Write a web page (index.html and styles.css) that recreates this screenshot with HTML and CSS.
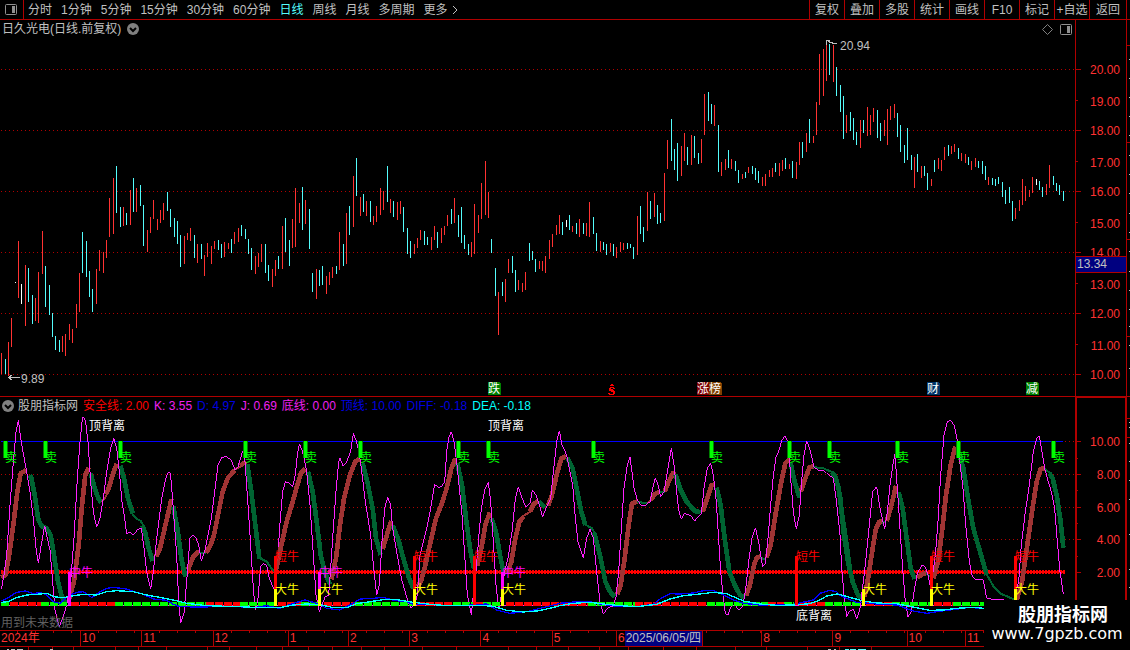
FILE: index.html
```html
<!DOCTYPE html>
<html lang="zh-CN">
<head>
    <meta charset="UTF-8">
    <meta name="viewport" content="width=device-width, initial-scale=1.0">
    <title>日久光电 日线</title>
    <link rel="stylesheet" href="styles.css">
</head>
<body>

    <!-- Toolbar -->
    <header class="toolbar">
        <button class="panel-btn" aria-label="侧栏">
            <svg class="icon" width="13" height="11" viewBox="0 0 13 11">
                <rect x="1.5" y=".5" width="11" height="10" rx="1" fill="none" stroke="#909090"/>
                <rect x="8" y="2" width="3" height="7" fill="#909090"/>
            </svg>
        </button>
        <nav class="periods">
            <button>分时</button>
            <button>1分钟</button>
            <button>5分钟</button>
            <button>15分钟</button>
            <button>30分钟</button>
            <button>60分钟</button>
            <button class="active">日线</button>
            <button>周线</button>
            <button>月线</button>
            <button>多周期</button>
            <button class="more">更多
                <svg class="icon" width="6" height="10" viewBox="0 0 6 10"><path d="M1 1L5 5L1 9" fill="none" stroke="#c0c0c0"/></svg>
            </button>
        </nav>
        <div class="tools">
            <button>复权</button>
            <button>叠加</button>
            <button>多股</button>
            <button>统计</button>
            <button>画线</button>
            <button>F10</button>
            <button>标记</button>
            <button>+自选</button>
            <button>返回</button>
        </div>
    </header>

    <!-- Price chart -->
    <section class="pane">
        <div class="pane-head">
            <div class="head-left">
                <h1>日久光电(日线.前复权)</h1>
                <button class="toggle" aria-label="展开">
                    <svg class="icon" width="12" height="12" viewBox="0 0 12 12"><circle cx="6" cy="6" r="6" fill="#808080"/><path d="M3 5L6 8L9 5" fill="none" stroke="#000" stroke-width="2"/></svg>
                </button>
                <div class="head-icons">
                    <svg class="icon" width="11" height="11" viewBox="0 0 11 11"><path d="M5.5 .5L10.5 5.5L5.5 10.5L.5 5.5Z" fill="none" stroke="#808080"/></svg>
                    <svg class="icon" width="12" height="11" viewBox="0 0 12 11"><rect x=".5" y=".5" width="11" height="10" rx="1" fill="none" stroke="#909090"/><rect x="7" y="2" width="3" height="7" fill="#909090"/></svg>
                </div>
            </div>
            <div class="head-axis"></div>
            <div class="head-edge"></div>
        </div>
        <svg id="price" class="chart" viewBox="0 38 1130 358"></svg>
    </section>

    <!-- Indicator chart -->
    <section class="pane indicator">
        <div class="pane-head">
            <div class="head-left legend">
                <button class="toggle" aria-label="指标">
                    <svg class="icon" width="12" height="12" viewBox="0 0 12 12"><circle cx="6" cy="6" r="6" fill="#808080"/><path d="M3 5L6 8L9 5" fill="none" stroke="#000" stroke-width="2"/></svg>
                </button>
                <span>股朋指标网</span>
                <span class="red">安全线: 2.00</span>
                <span class="magenta">K: 3.55</span>
                <span class="blue">D: 4.97</span>
                <span class="magenta">J: 0.69</span>
                <span class="magenta">底线: 0.00</span>
                <span class="blue">顶线: 10.00</span>
                <span class="blue">DIFF: -0.18</span>
                <span class="cyan">DEA: -0.18</span>
            </div>
            <div class="head-axis"></div>
            <div class="head-edge"></div>
        </div>
        <svg id="kdj" class="chart" viewBox="0 415 1130 215"></svg>
    </section>

    <!-- Time axis, each month grows with its number of trading days -->
    <ol class="months">
        <li style="flex-grow: 81">2024年</li>
        <li style="flex-grow: 61">10</li>
        <li style="flex-grow: 71">11</li>
        <li style="flex-grow: 75">12</li>
        <li style="flex-grow: 60">1</li>
        <li style="flex-grow: 61">2</li>
        <li style="flex-grow: 71">3</li>
        <li style="flex-grow: 71">4</li>
        <li style="flex-grow: 64">5</li>
        <li style="flex-grow: 146">6<time datetime="2025-06-05">2025/06/05/四</time></li>
        <li style="flex-grow: 71">8</li>
        <li style="flex-grow: 74">9</li>
        <li style="flex-grow: 58">10</li>
        <li style="flex-grow: 166">11</li>
    </ol>
    <svg id="next" class="chart" viewBox="0 647 1130 3"></svg>

    <div class="watermark">
        <strong>股朋指标网</strong>
        <span>www.7gpzb.com</span>
    </div>

    <script src="script.js"></script>
</body>
</html>
```
FILE: styles.css
```css
/* Basic Reset */
* {
    margin: 0;
    padding: 0;
    box-sizing: border-box;
}

body {
    position: relative;
    background-color: #000;
    color: #c0c0c0;
    font-family: "Liberation Sans", "Noto Sans CJK SC", sans-serif;
    font-size: 12px;
    line-height: 18px;
    overflow-x: hidden;
}

button {
    background: none;
    border: none;
    color: inherit;
    font: inherit;
    white-space: nowrap;
    cursor: pointer;
}

.icon,
.chart {
    display: block;
}

/* Toolbar */
.toolbar {
    display: flex;
    height: 20px;
    border-bottom: 1px solid #b00000;
}

.panel-btn {
    width: 24px;
    padding-left: 4px;
    border-right: 1px solid #b00000;
}

.periods {
    display: flex;
    gap: 9px;
    padding-left: 4px;
}

.periods .active {
    color: #54fcfc;
}

.periods .more {
    display: flex;
    align-items: center;
    gap: 4px;
}

.tools {
    display: flex;
    margin-left: auto;
    padding-right: 3px;
}

.tools button {
    width: 35px;
    border-left: 1px solid #b00000;
}

.tools button:last-child {
    width: 38px;
    border-right: 1px solid #b00000;
}

/* Panes */
.pane-head {
    display: grid;
    grid-template-columns: minmax(0, 1075fr) 52fr 3fr;
    height: 18px;
}

.head-left {
    display: flex;
    align-items: center;
    padding-left: 2px;
}

.head-left h1 {
    font-size: 12px;
    font-weight: normal;
    margin-right: 6px;
}

.head-icons {
    display: flex;
    gap: 7px;
    margin-left: auto;
    padding-right: 3px;
}

.head-axis {
    border-left: 1px solid #b00000;
    border-right: 1px solid #b00000;
}

.indicator {
    border-top: 1px solid #b00000;
}

.indicator .head-axis {
    border-width: 2px;
    border-top: 1px solid #b00000;
}

/* Indicator legend */
.legend {
    gap: 5px;
    white-space: nowrap;
}

.legend .toggle {
    margin-right: -1px;
}

.red { color: #ff0000; }
.blue { color: #0000e0; }
.magenta { color: #f020f0; }
.cyan { color: #00ffff; }

/* Chart drawing */
.chart {
    width: 100%;
    height: auto;
    shape-rendering: crispEdges;
}

.grid { stroke: #b00000; stroke-dasharray: 1 3; }
.frame { stroke: #b00000; }
.scale { fill: #ff3232; text-anchor: end; }
.r { fill: #ff3232; }
.c { fill: #54fcfc; }
.w { fill: #fff; }
.label { fill: #c0c0c0; }
.faint { fill: #606060; }
.sell { fill: #00ff00; }
.pointer { fill: none; stroke: #c0c0c0; }

.curve {
    fill: none;
    stroke-width: 3;
}

.up { stroke: #a03434; stroke-width: 14; stroke-linejoin: round; }
.down { stroke: #006432; stroke-width: 14; stroke-linejoin: round; }
.thin { stroke-width: 6; }
.j { stroke: #ff20ff; }
.diff { stroke: #0000ff; stroke-width: 4; }
.dea { stroke: #00ffff; stroke-width: 4; }

/* Time axis */
.months {
    display: flex;
    height: 17px;
    line-height: 15px;
    list-style: none;
    color: #ff3232;
    border-top: 1px solid #b00000;
    border-bottom: 1px solid #b00000;
}

.months li {
    display: flex;
    flex-basis: 0;
    min-width: 0;
    text-indent: 1px;
    border-left: 1px solid #b00000;
    background: repeating-linear-gradient(to right, transparent 0 17px, #b00000 17px 18px) 0 0 / 100% 2px no-repeat;
}

.months li:first-child {
    border-left: none;
}

.months time {
    padding: 0 1px;
    text-indent: 0;
    background-color: #000080;
    color: #c0c0c0;
    border-right: 1px solid #b00000;
    white-space: nowrap;
}

/* Site mark over the bottom right corner */
.watermark {
    position: absolute;
    right: 0;
    bottom: 0;
    display: flex;
    flex-direction: column;
    align-items: center;
    width: 146px;
    height: 50px;
    padding-top: 5px;
    background-color: #000;
    color: #fff;
}

.watermark strong {
    padding-left: 12px;
    font-size: 18px;
    line-height: 20px;
}

.watermark span {
    font-family: "DejaVu Sans", sans-serif;
    font-size: 16px;
    line-height: 18px;
}
```
FILE: script.js
```javascript
const NS = 'http://www.w3.org/2000/svg';
const price = document.getElementById('price');
const kdj = document.getElementById('kdj');
const next = document.getElementById('next');

function add(parent, tag, attrs, text) {
    const el = document.createElementNS(NS, tag);
    for (const key in attrs) el.setAttribute(key, attrs[key]);
    if (text) el.textContent = text;
    parent.appendChild(el);
    return el;
}

function line(parent, cls, x1, y1, x2, y2) {
    add(parent, 'path', { class: cls, d: `M${x1} ${y1}L${x2} ${y2}` });
}

function box(parent, x, y, width, height, fill) {
    add(parent, 'rect', { x, y, width, height, fill });
}

function label(parent, cls, x, y, text) {
    add(parent, 'text', { class: cls, x, y }, text);
}

// Daily range: x, high, low, colour (r up, c down, w flat)
const bars = `1 353 374 r,5 359 374 c,8 342 376 r,11 318 347 r,15 282 283 w,18 241 298 r,21 284 304 w,25 265 326 r,28 268 302 c,32 295 324 c,
35 298 321 r,38 272 323 r,42 231 274 r,45 266 307 c,49 285 315 c,52 313 337 c,55 336 350 c,59 340 352 c,62 336 352 r,65 334 356 r,
69 324 340 r,72 329 343 r,76 304 328 r,79 273 312 r,82 232 273 c,86 241 277 c,89 271 297 c,92 289 312 c,96 269 304 r,99 250 271 r,
103 252 273 r,106 240 258 r,109 198 237 r,113 178 234 r,116 166 213 c,120 207 227 c,123 207 226 r,126 213 225 c,130 190 225 r,133 178 212 c,
136 188 212 r,140 185 206 c,143 205 246 c,147 230 252 r,150 217 233 r,153 200 219 r,157 219 230 r,160 210 223 r,163 203 220 r,167 192 211 c,
170 209 227 c,174 218 237 c,177 221 244 c,180 235 267 c,184 236 264 r,187 233 240 r,190 228 241 r,194 235 258 c,197 244 263 r,201 244 259 c,
204 255 276 r,207 243 257 r,211 246 264 r,214 241 249 r,218 240 250 c,221 244 258 c,224 242 257 r,228 243 249 r,231 239 253 c,234 232 244 r,
238 228 242 r,241 225 236 c,245 229 239 c,248 239 254 c,251 248 270 c,255 256 274 r,258 253 267 r,261 244 262 r,265 244 273 c,268 265 281 c,
272 269 287 r,275 260 276 r,278 256 269 c,282 226 269 r,285 218 252 c,289 240 266 c,292 219 248 r,295 188 247 r,299 203 223 r,302 187 230 c,
305 200 224 r,309 209 249 c,312 273 292 c,316 269 299 r,319 270 286 c,322 266 285 c,326 276 294 r,329 272 285 r,332 267 278 r,336 266 274 c,
339 232 270 r,343 244 266 c,346 213 264 r,349 206 235 c,353 176 227 r,356 158 196 c,360 197 216 r,363 194 212 c,366 201 216 r,370 201 222 c,
373 216 225 r,376 206 222 r,380 188 215 r,383 191 210 r,387 166 202 c,390 199 213 r,393 201 217 c,397 202 220 r,400 201 214 r,403 207 232 c,
407 228 254 c,410 241 258 c,414 244 254 r,417 238 248 r,420 230 240 r,424 231 245 c,427 237 245 c,431 237 250 r,434 226 240 r,437 232 248 c,
441 228 243 r,444 226 235 r,447 215 226 r,451 209 224 c,454 198 223 r,458 215 237 c,461 207 243 c,464 235 249 c,468 244 255 c,471 242 257 r,
474 204 254 r,478 215 233 r,481 183 219 r,485 161 215 r,488 192 218 r,491 239 253 c,495 268 296 c,498 292 335 r,502 282 296 c,505 279 302 r,
508 259 273 r,512 256 273 c,515 270 292 c,518 280 290 r,522 283 292 r,525 272 290 r,529 243 261 c,532 251 260 c,535 259 272 c,539 261 269 r,
542 261 271 r,545 256 273 r,549 240 259 r,552 234 247 r,556 225 235 r,559 215 234 r,562 222 235 c,566 220 227 w,569 215 230 c,572 226 232 r,
576 223 234 c,579 219 237 r,583 223 234 c,586 223 236 r,589 202 237 r,593 217 234 c,596 233 251 c,600 241 252 r,603 242 250 c,606 244 255 c,
610 243 252 r,613 244 256 c,616 247 258 r,620 242 252 r,623 243 250 r,627 243 249 c,630 244 248 c,633 247 259 c,637 216 255 r,640 206 234 c,
643 227 242 c,647 192 231 r,650 201 219 c,654 193 217 r,657 205 224 c,660 213 223 c,664 173 221 r,667 140 169 r,671 119 161 c,674 149 170 c,
677 143 181 c,681 146 176 r,684 133 161 r,687 147 165 c,691 135 165 r,694 136 158 c,698 153 164 c,701 139 163 r,704 94 135 r,708 92 121 c,
711 104 124 c,714 105 126 r,718 125 172 c,721 162 176 r,725 159 170 r,728 150 168 c,731 159 169 r,735 161 171 c,738 170 183 c,742 174 179 r,
745 172 178 c,748 167 173 r,752 166 174 c,755 168 180 c,758 171 183 c,762 177 186 r,765 174 186 r,769 170 177 r,772 168 177 r,775 163 172 c,
779 163 176 r,782 160 171 r,785 158 169 c,789 164 169 r,792 161 178 c,796 162 179 r,799 142 165 r,802 142 158 c,806 133 152 r,809 119 143 c,
813 136 143 r,816 102 135 r,819 54 105 r,823 49 96 r,826 43 81 r,829 44 75 c,833 45 82 r,836 67 96 c,840 85 112 c,843 96 139 c,
846 115 133 r,850 112 131 c,853 118 140 c,856 132 145 c,860 120 148 r,863 120 133 c,867 107 136 r,870 115 135 r,873 108 122 r,877 110 138 c,
880 123 141 c,884 120 136 r,887 109 145 r,890 106 120 r,894 104 118 r,897 113 137 c,900 125 152 c,904 145 163 c,907 128 160 c,911 155 170 c,
914 157 188 r,917 154 172 c,921 166 178 r,924 166 176 c,927 173 190 c,931 179 186 r,934 160 172 c,938 158 169 r,941 160 171 r,944 147 160 r,
948 145 156 c,951 146 154 r,954 144 152 r,958 148 159 c,961 153 161 r,965 154 163 r,968 157 165 c,971 161 170 r,975 158 167 r,978 161 168 c,
982 161 174 c,985 166 180 c,988 177 185 r,992 178 185 c,995 179 186 c,998 177 184 c,1002 182 197 c,1005 190 204 c,1009 187 203 c,1012 201 221 c,
1015 208 219 r,1019 200 211 r,1022 179 205 r,1025 186 201 r,1029 190 197 r,1032 177 193 r,1036 179 185 w,1039 181 190 c,1042 187 197 c,
1046 184 195 r,1049 165 188 r,1053 176 185 c,1056 183 191 c,1059 185 195 c,1063 191 201 c`;

// Price grid and scale
for (let p = 20; p >= 10; p--) {
    const y = Math.round(69 + (20 - p) * 30.5);
    if (p % 2 === 0) line(price, 'grid', 1, y + 0.5, 1075, y + 0.5);
    line(price, 'frame', 1075, y + 0.5, p % 2 ? 1078 : 1081, y + 0.5);
    label(price, 'scale', 1120, y + (p % 2 ? 6 : 5), p.toFixed(2));
}
line(price, 'frame', 1075.5, 38, 1075.5, 396);
line(price, 'frame', 1126.5, 38, 1126.5, 396);

bars.split(',').forEach(row => {
    const [x, high, low, cls] = row.trim().split(' ');
    add(price, 'rect', { class: cls, x, y: high, width: 1, height: low - high });
});

// Current value on the scale
box(price, 1075, 256, 52, 17, '#b00000');
box(price, 1076, 257, 50, 15, '#000080');
label(price, 'label', 1077, 268, '13.34');

// High and low callouts
add(price, 'path', { class: 'pointer', d: 'M826 40.5H830M826.5 40V45M828 41.5L834 43.5H837' });
label(price, 'label', 840, 50, '20.94');
add(price, 'path', { class: 'pointer', d: 'M8 377.5H20M12 375L8.5 377.5L12 380' });
label(price, 'label', 21, 383, '9.89');

// Event badges
[[488, '跌', '#008000'], [697, '涨', '#800000'], [709, '榜', '#804000'], [927, '财', '#003366'], [1026, '减', '#008000']].forEach(([x, text, fill]) => {
    add(price, 'path', { fill, d: `M${x} 382h11l2 2v11h-13z` });
    label(price, 'w', x, 393, text);
});
add(price, 'path', { fill: '#ff0000', d: 'M611 384h2v1h1v1h-4v-1h1zM610 387h4v1h1v1h-2v-1h-2v1h2v1h1v1h1v3h-1v1h-5v-1h-1v-1h2v1h3v-2h-2v-1h-2v-3h1z' });

// Indicator grid and scale
[[10, 441], [8, 474], [6, 507], [4, 539], [2, 572]].forEach(([value, y]) => {
    if (value > 2) line(kdj, 'grid', 1, y + 0.5, 1076, y + 0.5);
    line(kdj, 'frame', 1076, y + 0.5, 1081, y + 0.5);
    label(kdj, 'scale', 1120, y + 5, value.toFixed(2));
});
[458, 490, 523, 556].forEach(y => line(kdj, 'frame', 1076, y + 0.5, 1078, y + 0.5));
box(kdj, 1075, 415, 2, 215, '#b00000');
box(kdj, 1125, 415, 2, 215, '#b00000');
box(kdj, 1, 441, 1062, 1, '#0000ff');

// Safety line
add(kdj, 'path', { d: 'M1 572H1066', stroke: '#ff0000', 'stroke-width': 4, 'stroke-dasharray': '2 1' });
add(kdj, 'path', { d: 'M1 572H1064', stroke: '#ff0000', 'stroke-width': 2 });

// Curve points are thirds of a pixel, counted from each quarter's left edge
function makeQuarters() {
    return [0, 280, 560, 840].map(x => add(kdj, 'g', { transform: `translate(${x} 395) scale(0.333333)` }));
}

let quarters = makeQuarters();

function curve(q, cls, points) {
    add(quarters[q], 'polyline', { class: 'curve ' + cls, points });
}

const ribbon = [
    [0, 'up', '4,548 16,540 26,490 40,390 52,290 62,235 78,226'],
    [0, 'down', '90,240 94,250 104,300 114,370 124,393 140,400 152,420 162,480 174,560 184,600 196,625'],
    [0, 'up', '208,610 222,560 236,450 246,330 256,240 266,218'],
    [0, 'down', '272,235 284,280 296,312 304,322'],
    [0, 'up thin', '304,322 312,313 320,300'],
    [0, 'up', '318,298 326,280 338,240 350,206'],
    [0, 'down', '361,212 372,250 384,310 398,355'],
    [0, 'down thin', '396,355 408,370 422,378 432,394'],
    [0, 'down', '428,392 436,415 446,460 458,498'],
    [0, 'up', '468,485 480,460 494,400 508,340 514,312'],
    [0, 'down', '520,335 532,400 544,490 556,545'],
    [0, 'up', '564,525 580,485 598,468'],
    [0, 'down thin', '598,475 618,474'],
    [0, 'up', '618,474 632,450 642,420 652,370 668,290 684,248 704,226'],
    [0, 'up thin', '702,225 722,214'],
    [0, 'up', '720,212 738,200'],
    [0, 'down', '742,208 754,290 766,390 778,490'],
    [0, 'down thin', '776,488 800,500 822,530'],
    [1, 'up', '-12,525 4,450 20,380 38,320 52,270 64,232 76,222'],
    [1, 'down', '84,230 98,290 110,380 122,480 134,530 150,568'],
    [1, 'up', '154,553 168,490 180,390 192,310 210,240 226,200 240,190'],
    [1, 'down', '248,205 262,260 278,340 288,430 302,480'],
    [1, 'up', '308,462 322,415 334,378'],
    [1, 'down', '338,392 354,430 370,490 386,545 400,580'],
    [1, 'up', '414,575 424,555 436,510 454,430 468,370 484,330 500,280 514,220 526,190'],
    [1, 'down', '532,205 546,270 558,370 570,460 582,522'],
    [1, 'up', '592,512 604,460 616,390 630,352'],
    [1, 'down', '634,370 648,410 660,480 672,540'],
    [1, 'up', '682,535 694,500 706,430 718,380 732,364'],
    [1, 'up thin', '730,363 752,349'],
    [1, 'up', '750,350 762,326 774,318'],
    [1, 'down', '778,320 796,338'],
    [1, 'up', '804,332 816,300 830,240 844,190 858,184'],
    [2, 'down', '22,188 38,220 52,290 64,350 76,390'],
    [2, 'down thin', '74,388 96,400 104,415'],
    [2, 'down', '102,412 110,440 122,490 136,560 150,590 164,606'],
    [2, 'up', '172,598 182,570 194,490 206,390 216,325 232,320'],
    [2, 'down thin', '232,320 262,326'],
    [2, 'up thin', '262,324 276,314'],
    [2, 'up', '274,312 284,298 298,290'],
    [2, 'down thin', '296,292 314,290'],
    [2, 'up', '314,290 326,260 342,230'],
    [2, 'down', '346,238 362,285 380,320 404,348 422,352'],
    [2, 'up', '428,350 442,310 454,272 464,268'],
    [2, 'down', '470,278 482,330 494,430 508,530 524,570 540,600 554,608'],
    [2, 'up', '558,602 570,570 582,510 590,488 602,484'],
    [2, 'down thin', '600,488 618,494'],
    [2, 'up', '620,488 632,450 648,350 664,260 676,205 688,192'],
    [2, 'down', '692,205 704,260 718,308'],
    [2, 'up', '722,290 736,250 748,218 760,214'],
    [2, 'down thin', '760,216 790,220 818,232'],
    [2, 'down', '816,232 826,245 836,280 848,370 860,450 869,520'],
    [3, 'down', '0,300 12,420 24,500 38,560 54,600 64,610'],
    [3, 'up', '74,605 86,540 98,460 108,400 118,380 128,378'],
    [3, 'down thin', '126,384 138,380'],
    [3, 'up', '140,378 152,340 168,272'],
    [3, 'down', '176,292 188,340 200,430 212,520 224,552'],
    [3, 'up', '232,548 246,538 260,534'],
    [3, 'down thin', '258,535 276,548'],
    [3, 'up', '280,550 294,500 306,410 318,300 332,210 346,155'],
    [3, 'down', '356,170 370,220 384,310 400,400 420,470 440,540'],
    [3, 'down thin', '438,535 460,573 480,595 524,614'],
    [3, 'up', '530,615 546,560 562,450 576,350 590,260 602,222 614,220'],
    [3, 'down thin', '614,222 630,234'],
    [3, 'down', '628,234 638,250 650,300 662,380 670,458']
];
ribbon.forEach(([q, cls, points]) => curve(q, cls, points));

curve(0, 'j', '4,583 12,540 20,480 30,330 40,200 48,110 55,75 62,130 78,220 90,290 100,370 108,460 115,505 122,460 134,392 142,430 150,465 158,560 165,645 178,695 190,665 200,630 212,560 222,430 232,250 240,140 244,100 248,65 256,75 264,140 272,260 280,350 290,397 300,370 310,310 320,230 332,160 341,130 350,160 358,230 366,320 374,370 380,418 390,410 400,421 412,405 424,398 432,460 440,530 452,583 460,530 468,450 475,390 485,310 495,260 503,233 511,233 516,290 522,370 530,480 536,620 542,685 552,655 560,560 570,430 578,421 586,425 596,450 604,498 614,470 624,420 634,370 644,290 654,210 666,187 678,185 694,195 705,225 714,215 722,190 728,168 735,200 744,330 752,450 760,580 766,645 774,610 782,515 790,505 800,512 808,550 822,583 832,500 840,385');
curve(1, 'j', '0,385 8,290 16,260 26,263 38,275 46,240 52,180 58,146 66,165 72,190 80,230 90,330 100,480 108,600 118,650 126,630 136,605 146,600 152,520 160,400 168,290 176,200 180,190 190,214 200,200 212,170 220,115 228,135 236,165 244,220 256,320 272,420 280,510 290,600 298,570 306,440 314,340 323,307 332,330 338,400 350,470 364,550 378,600 392,640 404,630 412,600 420,480 430,440 440,400 452,340 464,268 474,277 484,275 494,260 500,170 506,130 514,110 522,140 530,200 536,260 546,360 554,480 562,600 574,660 580,600 588,530 596,430 604,340 614,285 625,262 632,320 640,440 648,570 656,640 664,600 674,530 684,490 696,410 706,310 715,275 726,310 738,335 750,325 757,285 768,300 778,330 788,366 798,340 812,310 820,230 830,140 838,107 846,150');
curve(2, 'j', '-2,107 6,150 20,180 30,230 38,270 46,370 54,440 70,490 80,430 90,402 100,430 110,530 120,620 130,657 142,640 160,632 168,605 176,530 184,400 192,280 202,210 210,187 216,230 222,280 232,315 244,333 258,330 270,320 278,280 286,248 294,270 302,305 312,290 322,230 334,158 342,210 350,290 356,345 364,372 374,355 392,362 404,378 424,355 432,280 442,220 452,204 460,240 468,310 474,400 482,530 490,610 496,655 504,660 512,635 524,628 536,645 548,635 556,590 566,500 576,430 586,398 596,440 602,480 608,515 616,505 624,430 632,330 640,240 648,187 656,170 666,135 676,122 686,150 692,250 700,350 709,403 718,360 724,270 732,180 740,137 750,165 762,215 776,228 790,225 800,235 820,250 828,310 838,400 842,440');
curve(3, 'j', '0,430 6,530 12,600 20,665 28,650 40,643 50,673 60,640 70,560 80,470 90,370 98,290 110,275 120,340 134,403 142,350 150,270 160,200 165,178 172,280 180,400 188,520 196,620 204,665 214,650 222,590 232,535 246,510 256,515 264,540 270,570 278,540 286,480 294,380 302,240 312,120 322,80 332,75 342,90 350,125 358,190 368,270 378,400 388,500 396,540 406,555 420,552 430,555 440,610 460,613 484,612 520,625 536,560 544,450 556,350 568,270 580,170 590,130 598,122 606,170 614,220 622,250 634,290 644,340 652,440 660,530 670,597');

// Trend strip on the zero line: start, end, 1 for green
box(kdj, 1, 605, 983, 1, '#ff20ff');
[[1, 10, 1], [10, 41, 0], [41, 67, 1], [71, 115, 0], [115, 206, 1], [206, 240, 0], [240, 275, 1], [278, 301, 0], [301, 318, 1],
 [324, 355, 0], [355, 413, 1], [417, 453, 0], [453, 473, 1], [476, 483, 0], [483, 501, 1], [506, 588, 0], [588, 635, 1], [635, 707, 0],
 [707, 768, 1], [768, 784, 0], [784, 794, 1], [799, 825, 0], [825, 861, 1], [866, 892, 0], [892, 930, 1], [934, 953, 0], [953, 984, 1]
].forEach(([x1, x2, green]) => {
    add(kdj, 'path', { d: `M${x1} 604H${x2}`, stroke: green ? '#00ff00' : '#ff0000', 'stroke-width': 4, 'stroke-dasharray': '8 1' });
});

// DIFF and DEA run over the strip, so they get their own groups
quarters = makeQuarters();
curve(0, 'diff', '4,618 24,608 50,592 75,588 100,596 120,592 140,600 160,620 180,625 200,605 230,592 250,590 276,608 300,590 320,580 340,577 380,582 410,592 430,598 460,612 500,616 520,628 540,635 600,636 700,634 760,638 800,632 840,640');
curve(1, 'diff', '0,640 40,625 75,615 110,625 140,640 180,645 210,630 240,612 280,610 310,607 340,616 380,620 400,628 450,628 500,632 560,631 620,627 650,645 690,655 740,650 780,640 820,630 840,625');
curve(2, 'diff', '0,625 40,621 90,620 120,627 170,634 230,635 280,628 300,612 330,596 360,597 400,594 430,587 460,587 490,600 520,615 550,625 600,630 700,628 760,615 780,595 810,586 830,590 840,601');
curve(3, 'diff', '0,601 20,610 50,622 110,627 170,630 220,648 260,655 290,650 330,645 390,637 432,641');
curve(0, 'dea', '4,622 24,620 50,608 80,600 120,597 140,595 160,605 190,608 220,602 250,598 290,600 320,590 350,587 400,590 440,600 480,607 520,615 560,625 620,632 680,634 720,635 780,638 840,638');
curve(1, 'dea', '0,638 40,630 80,627 120,629 160,638 200,638 230,626 270,620 310,614 350,614 400,622 450,628 500,632 600,631 640,634 680,646 730,651 770,648 810,640 840,632');
curve(2, 'dea', '0,632 40,625 90,622 130,627 180,632 230,635 290,628 330,612 370,602 420,597 460,592 500,596 550,618 600,627 650,631 700,630 750,626 780,615 800,603 830,597 840,599');
curve(3, 'dea', '0,599 40,610 70,618 110,624 170,626 220,636 270,646 310,645 350,640 400,637 432,640');

// Sell marks hang from the top line
[5, 45, 120, 245, 305, 360, 458, 488, 593, 711, 789, 829, 897, 958, 1053].forEach(x => {
    box(kdj, x - 2, 441, 5, 17, '#008000');
    box(kdj, x - 1, 441, 3, 17, '#00ff00');
    label(kdj, 'sell', x, 462, '卖');
});

// Buy marks stand on the zero line: x, top, bottom, colour, text
[[69, 572, 605, '#ff00ff', '中牛'], [319, 572, 589, '#ff00ff', '中牛'], [502, 572, 589, '#ff00ff', '中牛'],
 [275, 556, 589, '#ff0000', '短牛'], [414, 556, 589, '#ff0000', '短牛'], [474, 556, 605, '#ff0000', '短牛'],
 [796, 556, 605, '#ff0000', '短牛'], [931, 556, 589, '#ff0000', '短牛'], [1015, 556, 589, '#ff0000', '短牛'],
 [275, 589, 606, '#ffff00', '大牛'], [319, 589, 606, '#ffff00', '大牛'], [414, 589, 606, '#ffff00', '大牛'],
 [502, 589, 606, '#ffff00', '大牛'], [863, 589, 606, '#ffff00', '大牛'], [931, 589, 606, '#ffff00', '大牛'], [1015, 589, 606, '#ffff00', '大牛']
].forEach(([x, top, bottom, fill, text]) => {
    box(kdj, x - 1, top, 3, bottom - top, fill);
    add(kdj, 'text', { x, y: top + 5, fill }, text);
});

label(kdj, 'w', 89, 430, '顶背离');
label(kdj, 'w', 488, 430, '顶背离');
label(kdj, 'w', 796, 620, '底背离');
label(kdj, 'faint', 1, 627, '用到未来数据');

// Right neighbour and the row below, only their edges show
[45, 142, 239, 336].forEach(y => box(price, 1127, y, 3, 1, '#b00000'));
[59, 78, 97, 116, 135, 155, 174, 193, 213, 232, 251, 271, 290, 309, 326, 345, 368].forEach(y => box(price, 1129, y, 1, 1, '#c0c0c0'));
[418, 437].forEach(y => box(kdj, 1127, y, 3, 1, '#b00000'));
[422, 427, 443, 461, 480, 499, 534, 569, 587].forEach(y => box(kdj, 1129, y, 1, 1, '#c0c0c0'));
[28, 52, 73, 115, 138, 166, 207, 229, 256, 282, 308, 332, 361, 384, 422, 456, 508, 536, 568, 599, 628, 663, 696, 735, 766, 807, 839, 871].forEach(x => box(next, x, 647, 1, 3, '#b00000'));
[[7, 2], [11, 4], [17, 6], [50, 3], [828, 3], [834, 2]].forEach(([x, w]) => box(next, x, 649, w, 1, '#c0c0c0'));
[[845, 4], [850, 6], [858, 8]].forEach(([x, w]) => box(next, x, 649, w, 1, '#54fcfc'));
```
